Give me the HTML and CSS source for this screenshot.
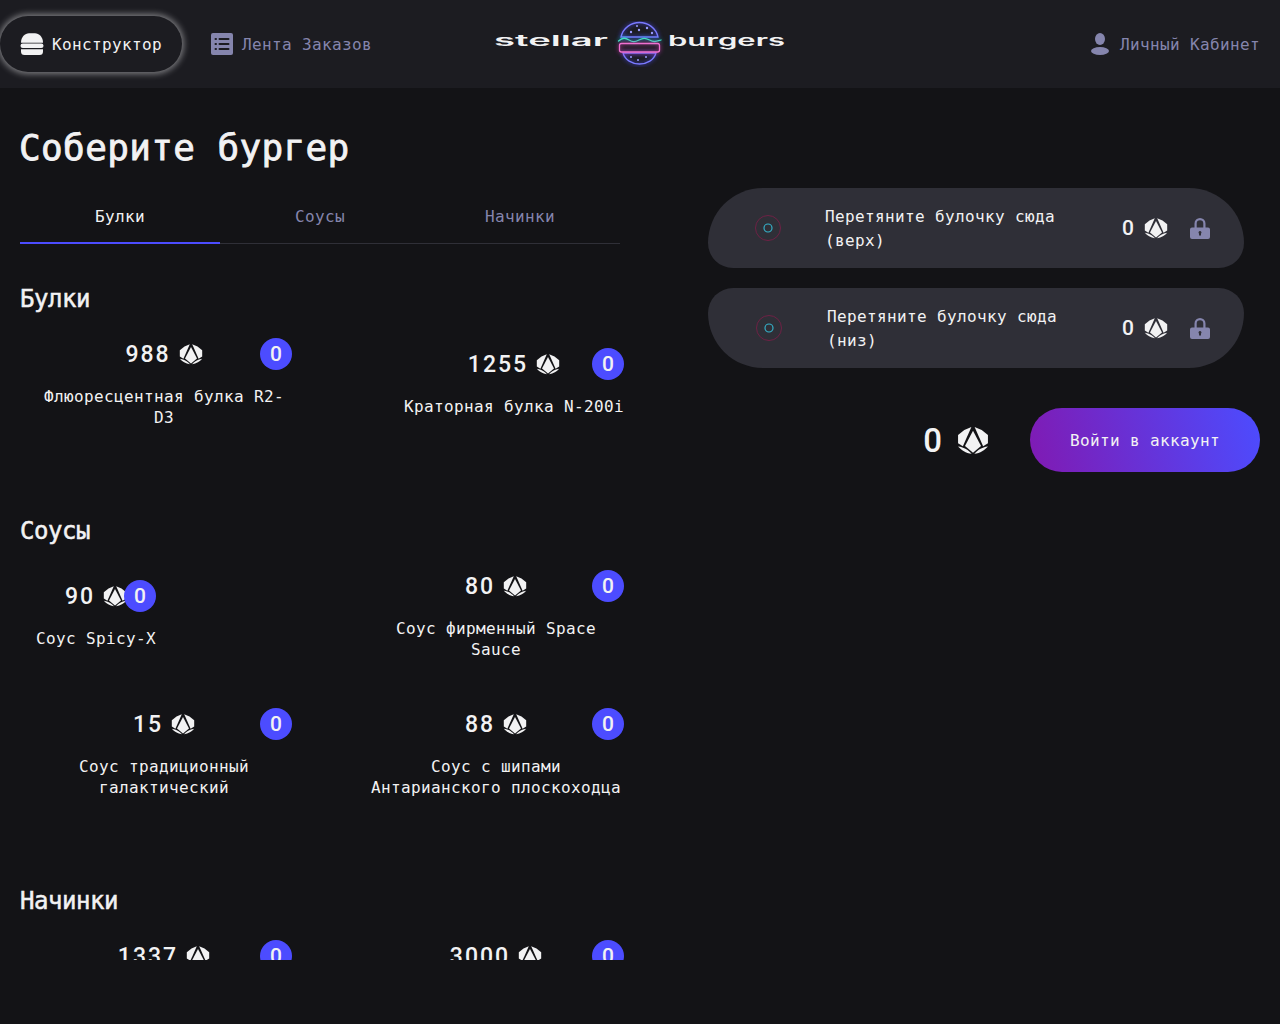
FILE: index.html
```html
<!DOCTYPE html>
<html lang="ru">
<head>
  <meta charset="UTF-8">
  <title>Stellar Burgers</title>
  <link rel="stylesheet" href="styles.css">
</head>
<body>
  <svg class="sprite" width="0" height="0">
    <symbol id="coin" viewBox="0 0 24 24">
      <path d="M12 5 18 16.500 12 21.500 6 16.500Z"/>
      <path d="M10.800 2.300 5.500 4.500 0.800 8.300V14.500L4.400 16.700Z"/>
      <path d="M13.200 2.300 18.500 4.500 23.200 8.300V14.500L19.600 16.700Z"/>
      <path d="M0.800 16.800C5.500 17.300 8.500 19.500 11 22.300 6.500 21.800 3.300 19.500 0.800 16.800Z"/>
      <path d="M23.200 16.800C18.500 17.300 15.500 19.500 13 22.300 17.500 21.800 20.700 19.500 23.200 16.800Z"/>
    </symbol>
    <symbol id="lock" viewBox="0 0 24 24">
      <path d="M6.500 12V7.500a5.500 5.500 0 0 1 11 0V12h-2.200V7.500a3.300 3.300 0 0 0-6.600 0V12Z"/>
      <path fill-rule="evenodd" d="M4 11.500h16a2 2 0 0 1 2 2V21a2 2 0 0 1-2 2H4a2 2 0 0 1-2-2v-7.500a2 2 0 0 1 2-2ZM12 15a1.500 1.500 0 0 0-1 2.600V19.500h2v-1.900A1.500 1.500 0 0 0 12 15Z"/>
    </symbol>
    <symbol id="bun" viewBox="0 0 80 40">
      <circle cx="40" cy="20" r="12.500" fill="none" stroke="#6e2145" stroke-width="1"/>
      <circle cx="40" cy="20" r="4" fill="none" stroke="#35b0c8" stroke-width="1.200"/>
    </symbol>
  </svg>

  <header class="header">
    <nav class="nav">
      <a class="nav-link nav-link-active">
        <svg class="icon" viewBox="0 0 24 24" fill="#f2f2f3">
          <path d="M1 10.700C1 5 5 1.300 9 1.300H15C19 1.300 23 5 23 10.700Z"/>
          <rect x="0.500" y="11.500" width="23" height="4.500" rx="2.200"/>
          <path d="M1 17.300H23V19.500A3.500 3.500 0 0 1 19.500 23H4.500A3.500 3.500 0 0 1 1 19.500Z"/>
        </svg>
        Конструктор
      </a>
      <a class="nav-link">
        <svg class="icon" viewBox="0 0 24 24">
          <rect x="1" y="1" width="22" height="22" rx="2" fill="#8585ad"/>
          <g fill="#1c1c21">
            <rect x="4.500" y="6" width="2.500" height="2" rx="1"/>
            <rect x="8.500" y="6" width="11" height="2" rx="1"/>
            <rect x="4.500" y="11" width="2.500" height="2" rx="1"/>
            <rect x="8.500" y="11" width="11" height="2" rx="1"/>
            <rect x="4.500" y="16" width="2.500" height="2" rx="1"/>
            <rect x="8.500" y="16" width="11" height="2" rx="1"/>
          </g>
        </svg>
        Лента Заказов
      </a>
    </nav>

    <svg class="logo" viewBox="0 0 292 46" width="292" height="46">
      <text class="logo-text" x="0" y="25" textLength="114" lengthAdjust="spacingAndGlyphs">stellar</text>
      <text class="logo-text" x="174" y="25" textLength="117" lengthAdjust="spacingAndGlyphs">burgers</text>
      <g fill="none" stroke-width="1.300" stroke-linecap="round">
        <g class="logo-glow-blue" stroke="#7a7aff">
          <path d="M127 16C129 7 137 1.500 145.500 1.500S162 7 164 16Z"/>
          <path d="M129 32H162C160 39 153 43 145.500 43S131 39 129 32Z"/>
        </g>
        <path class="logo-glow-teal" stroke="#3fe0c0" d="M124.500 20C129 16.500 131 16.500 135 19S141 21 145 19 151 16.500 155.500 19 162 20.500 167 19"/>
        <rect class="logo-glow-pink" x="125.500" y="22.500" width="40" height="8.500" rx="2" stroke="#f070d0"/>
      </g>
      <g fill="#9a9aff">
        <circle cx="137" cy="11" r="1.200"/>
        <circle cx="145" cy="9" r="1.200"/>
        <circle cx="153" cy="7" r="1.200"/>
        <circle cx="158" cy="12" r="1.200"/>
        <circle cx="143" cy="5" r="1"/>
        <circle cx="137" cy="36" r="1"/>
        <circle cx="144" cy="39" r="1"/>
        <circle cx="152" cy="36" r="1"/>
      </g>
    </svg>

    <a class="nav-link nav-link-end">
      <svg class="icon" viewBox="0 0 24 24" fill="#8585ad">
        <ellipse cx="12" cy="7" rx="5" ry="6"/>
        <ellipse cx="12" cy="19" rx="9" ry="4"/>
      </svg>
      Личный Кабинет
    </a>
  </header>

  <main class="main">
    <section class="menu">
      <h1 class="title">Соберите бургер</h1>
      <div class="tabs">
        <div class="tab tab-active">Булки</div>
        <div class="tab">Соусы</div>
        <div class="tab">Начинки</div>
      </div>
      <div class="list">
        <h2 class="group-title">Булки</h2>
        <div class="cards">
          <article class="card">
            <span class="count">0</span>
            <div class="price"><span>988</span><svg class="coin"><use href="#coin"/></svg></div>
            <p class="card-name">Флюоресцентная булка R2-D3</p>
          </article>
          <article class="card">
            <span class="count">0</span>
            <div class="price"><span>1255</span><svg class="coin"><use href="#coin"/></svg></div>
            <p class="card-name">Краторная булка N-200i</p>
          </article>
        </div>

        <h2 class="group-title">Соусы</h2>
        <div class="cards">
          <article class="card">
            <span class="count">0</span>
            <div class="price"><span>90</span><svg class="coin"><use href="#coin"/></svg></div>
            <p class="card-name">Соус Spicy-X</p>
          </article>
          <article class="card">
            <span class="count">0</span>
            <div class="price"><span>80</span><svg class="coin"><use href="#coin"/></svg></div>
            <p class="card-name">Соус фирменный Space Sauce</p>
          </article>
          <article class="card">
            <span class="count">0</span>
            <div class="price"><span>15</span><svg class="coin"><use href="#coin"/></svg></div>
            <p class="card-name">Соус традиционный галактический</p>
          </article>
          <article class="card">
            <span class="count">0</span>
            <div class="price"><span>88</span><svg class="coin"><use href="#coin"/></svg></div>
            <p class="card-name">Соус с шипами Антарианского плоскоходца</p>
          </article>
        </div>

        <h2 class="group-title">Начинки</h2>
        <div class="cards">
          <article class="card">
            <span class="count">0</span>
            <div class="price"><span>1337</span><svg class="coin"><use href="#coin"/></svg></div>
            <p class="card-name">Мясо бессмертных моллюсков Protostomia</p>
          </article>
          <article class="card">
            <span class="count">0</span>
            <div class="price"><span>3000</span><svg class="coin"><use href="#coin"/></svg></div>
            <p class="card-name">Говяжий метеорит (отбивная)</p>
          </article>
        </div>
      </div>
    </section>

    <section class="order">
      <div class="slot slot-top">
        <svg class="slot-bun"><use href="#bun"/></svg>
        <span class="slot-text">Перетяните булочку сюда (верх)</span>
        <span class="slot-price">0</span>
        <svg class="coin"><use href="#coin"/></svg>
        <svg class="lock"><use href="#lock"/></svg>
      </div>
      <div class="slot slot-low">
        <svg class="slot-bun"><use href="#bun"/></svg>
        <span class="slot-text">Перетяните булочку сюда (низ)</span>
        <span class="slot-price">0</span>
        <svg class="coin"><use href="#coin"/></svg>
        <svg class="lock"><use href="#lock"/></svg>
      </div>
      <div class="total">
        <span class="total-sum">0</span>
        <svg class="coin coin-big"><use href="#coin"/></svg>
        <button class="login">Войти в аккаунт</button>
      </div>
    </section>
  </main>
</body>
</html>
```

FILE: styles.css
```css
body {
  margin: 0;
  height: 1024px;
  overflow: hidden;
  background: #131316;
  color: #f2f2f3;
  font-family: "DejaVu Sans Mono", "Liberation Mono", monospace;
  font-size: 16px;
  letter-spacing: 0.37px;
}

.sprite {
  position: absolute;
}

.header {
  height: 88px;
  background: #1c1c21;
  display: grid;
  grid-template-columns: 1fr auto 1fr;
  align-items: center;
}

.nav {
  display: flex;
  gap: 8px;
}

.nav-link {
  display: flex;
  align-items: center;
  gap: 8px;
  height: 56px;
  padding: 0 20px;
  border-radius: 28px;
  color: #8585ad;
  white-space: nowrap;
}

.nav-link-active {
  color: #f2f2f3;
  box-shadow: 0 0 6px 2px rgba(242, 242, 243, 0.45);
}

.nav-link-end {
  justify-self: end;
}

.icon {
  width: 24px;
  height: 24px;
  flex: none;
}

.logo-text {
  font-family: Inter, sans-serif;
  font-size: 15px;
  font-weight: 600;
  letter-spacing: 0;
  fill: #f2f2f3;
}

.logo-glow-blue {
  filter: drop-shadow(0 0 2px #4c4cff);
}

.logo-glow-teal {
  filter: drop-shadow(0 0 2px #00cccc);
}

.logo-glow-pink {
  filter: drop-shadow(0 0 2px #e040c0);
}

.main {
  display: flex;
  justify-content: space-between;
  padding: 0 20px;
}

.menu {
  width: 620px;
}

.title {
  margin: 40px 0 20px -1px;
  font-size: 36px;
  font-weight: 400;
  line-height: 40px;
  letter-spacing: 0.37px;
  -webkit-text-stroke: 0.8px #f2f2f3;
}

.tabs {
  display: flex;
  width: 600px;
  border-bottom: 1px solid #2f2f37;
}

.tab {
  width: 200px;
  height: 55px;
  line-height: 58px;
  text-align: center;
  color: #8585ad;
}

.tab-active {
  color: #f2f2f3;
  box-shadow: 0 1px 0 #4c4cff, inset 0 -1px 0 #4c4cff;
}

.list {
  height: 716px;
  overflow: hidden;
  padding-top: 40px;
  box-sizing: border-box;
}

.group-title {
  margin: 0 0 24px;
  font-size: 24px;
  font-weight: 400;
  line-height: 30px;
  letter-spacing: -0.45px;
  -webkit-text-stroke: 0.5px #f2f2f3;
}

.cards {
  display: flex;
  flex-wrap: wrap;
  justify-content: space-between;
  align-items: center;
  gap: 48px 0;
  padding: 0 16px 88px;
}

.card {
  position: relative;
  min-height: 70px;
  max-width: 256px;
  text-align: center;
}

.card-name {
  margin: 16px 0 0;
  line-height: 21px;
}

.price {
  display: flex;
  justify-content: center;
  align-items: center;
  gap: 8px;
  height: 32px;
  font-family: Roboto, sans-serif;
  font-size: 23px;
  font-weight: 500;
  letter-spacing: 2px;
}

.coin {
  width: 24px;
  height: 24px;
  flex: none;
  fill: #f2f2f3;
}

.count {
  position: absolute;
  top: 0;
  right: 0;
  width: 32px;
  height: 32px;
  border-radius: 50%;
  background: #4c4cff;
  font-family: Roboto, sans-serif;
  font-size: 21px;
  font-weight: 500;
  line-height: 32px;
  letter-spacing: 0;
  text-align: center;
}

.order {
  width: 552px;
  padding-top: 100px;
}

.slot {
  display: flex;
  align-items: center;
  width: 536px;
  height: 80px;
  margin-bottom: 20px;
  padding: 0 32px 0 20px;
  box-sizing: border-box;
  background: #2f2f37;
}

.slot-top {
  border-radius: 88px 88px 40px 40px;
}

.slot-low {
  padding-left: 21px;
  border-radius: 40px 40px 88px 88px;
}

.slot-bun {
  width: 80px;
  height: 40px;
  flex: none;
}

.slot-text {
  width: 240px;
  margin-left: 17px;
  padding-top: 2px;
  line-height: 24px;
}

.slot-low .slot-text {
  margin-left: 18px;
}

.slot-price {
  margin-left: auto;
  margin-right: 10px;
  font-family: Roboto, sans-serif;
  font-size: 21px;
  font-weight: 500;
  letter-spacing: 0;
}

.lock {
  width: 24px;
  height: 24px;
  flex: none;
  margin-left: 20px;
  fill: #8585ad;
}

.total {
  display: flex;
  align-items: center;
  justify-content: flex-end;
  margin-top: 40px;
}

.total-sum {
  margin-right: 15px;
  font-family: Roboto, sans-serif;
  font-size: 33px;
  font-weight: 500;
  letter-spacing: 0;
}

.coin-big {
  width: 32px;
  height: 32px;
  margin-right: 41px;
}

.login {
  width: 230px;
  height: 64px;
  border: none;
  border-radius: 32px;
  background: linear-gradient(75deg, #801ab2, #4c4cff);
  color: #f2f2f3;
  font: inherit;
  letter-spacing: inherit;
}
```
